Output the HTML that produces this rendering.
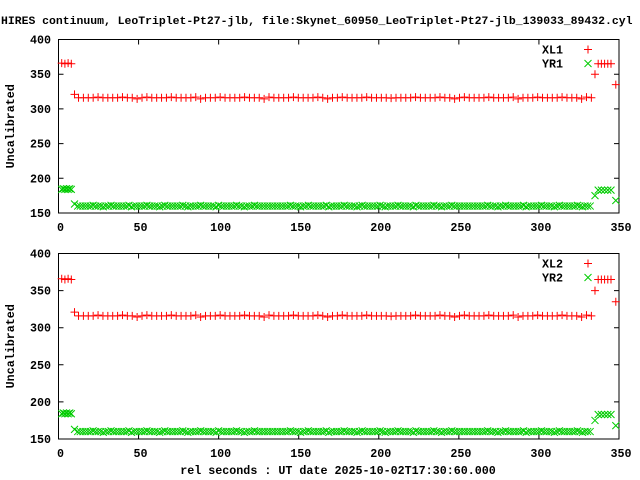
<!DOCTYPE html>
<html><head><meta charset="utf-8"><style>
html,body{margin:0;padding:0;background:#fff;width:640px;height:480px;overflow:hidden}
svg{display:block}
text{font-family:"Liberation Mono","DejaVu Sans Mono",monospace;font-weight:bold;font-size:11.7px;fill:#000}
</style></head><body>
<svg id="s" width="640" height="480" xmlns="http://www.w3.org/2000/svg">
<text x="1" y="24" style="font-size:11.45px">HIRES continuum, LeoTriplet-Pt27-jlb, file:Skynet_60950_LeoTriplet-Pt27-jlb_139033_89432.cyl</text>
<text x="338" y="474" text-anchor="middle">rel seconds : UT date 2025-10-02T17:30:60.000</text>
<g id="g"></g>
</svg>
<script>
var g=document.getElementById('g'),h='';
function P(top,bot,n){
 var x0=58.5,x1=619;
 function X(v){return x0+(x1-x0)*v/350}
 function Y(v){return bot-(bot-top)*(v-150)/250}
 h+='<rect x="'+x0+'" y="'+top+'" width="'+(x1-x0)+'" height="'+(bot-top)+'" fill="none" stroke="#000" stroke-width="1"/>';
 for(var v=0;v<=350;v+=50){var x=X(v);
  if(v>0&&v<350){h+='<path d="M'+x+' '+bot+'v-5M'+x+' '+top+'v5" stroke="#000"/>';}
  h+='<text x="'+(x+2)+'" y="'+(bot+18)+'" text-anchor="middle">'+v+'</text>';}
 for(var v=150;v<=400;v+=50){var y=Y(v);
  if(v>150&&v<400)h+='<path d="M'+x0+' '+y+'h5M'+x1+' '+y+'h-5" stroke="#000"/>';
  h+='<text x="51" y="'+(y+4)+'" text-anchor="end">'+v+'</text>';}
 var cy=(top+bot)/2;
 h+='<text transform="translate(14,'+cy+') rotate(-90)" text-anchor="middle">Uncalibrated</text>';
 function plus(x,y){h+='<path d="M'+(x-4)+' '+y+'h8M'+x+' '+(y-4)+'v8" stroke="#f00" stroke-width="1"/>';}
 function cross(x,y){h+='<path d="M'+(x-3.5)+' '+(y-3.5)+'l7 7M'+(x-3.5)+' '+(y+3.5)+'l7 -7" stroke="#0c0" stroke-width="1"/>';}
 var i,k=0;
 for(i=2;i<=8;i+=2){plus(X(i),Y(365+(i%4?1:0)));cross(X(i),Y(184));}
 for(i=3;i<=7;i+=2){cross(X(i),Y(185));}
 plus(X(10),Y(321));cross(X(10),Y(163));
 for(i=12.5;i<=333;i+=3.05){k++;
  plus(X(i),Y(316+((k*7)%5==0?1:0)-((k*11)%13==0?1.5:0)));}
 k=0;
 for(i=12;i<=333;i+=1.6){k++;
  cross(X(i),Y(160+((k*5)%7==0?1:0)-((k*3)%11==0?1:0)));}
 plus(X(335),Y(350));cross(X(335),Y(175));
 for(i=337;i<=345;i+=2){plus(X(i),Y(365));cross(X(i),Y(183));}
 plus(X(348),Y(335));cross(X(348),Y(168));
 h+='<text x="563" y="'+(top+14)+'" text-anchor="end">XL'+n+'</text>';
 plus(588,top+10);
 h+='<text x="563" y="'+(top+28)+'" text-anchor="end">YR'+n+'</text>';
 cross(588,top+24);
}
P(39.5,213,1);P(253.5,439,2);
g.innerHTML=h;
</script>
</body></html>
